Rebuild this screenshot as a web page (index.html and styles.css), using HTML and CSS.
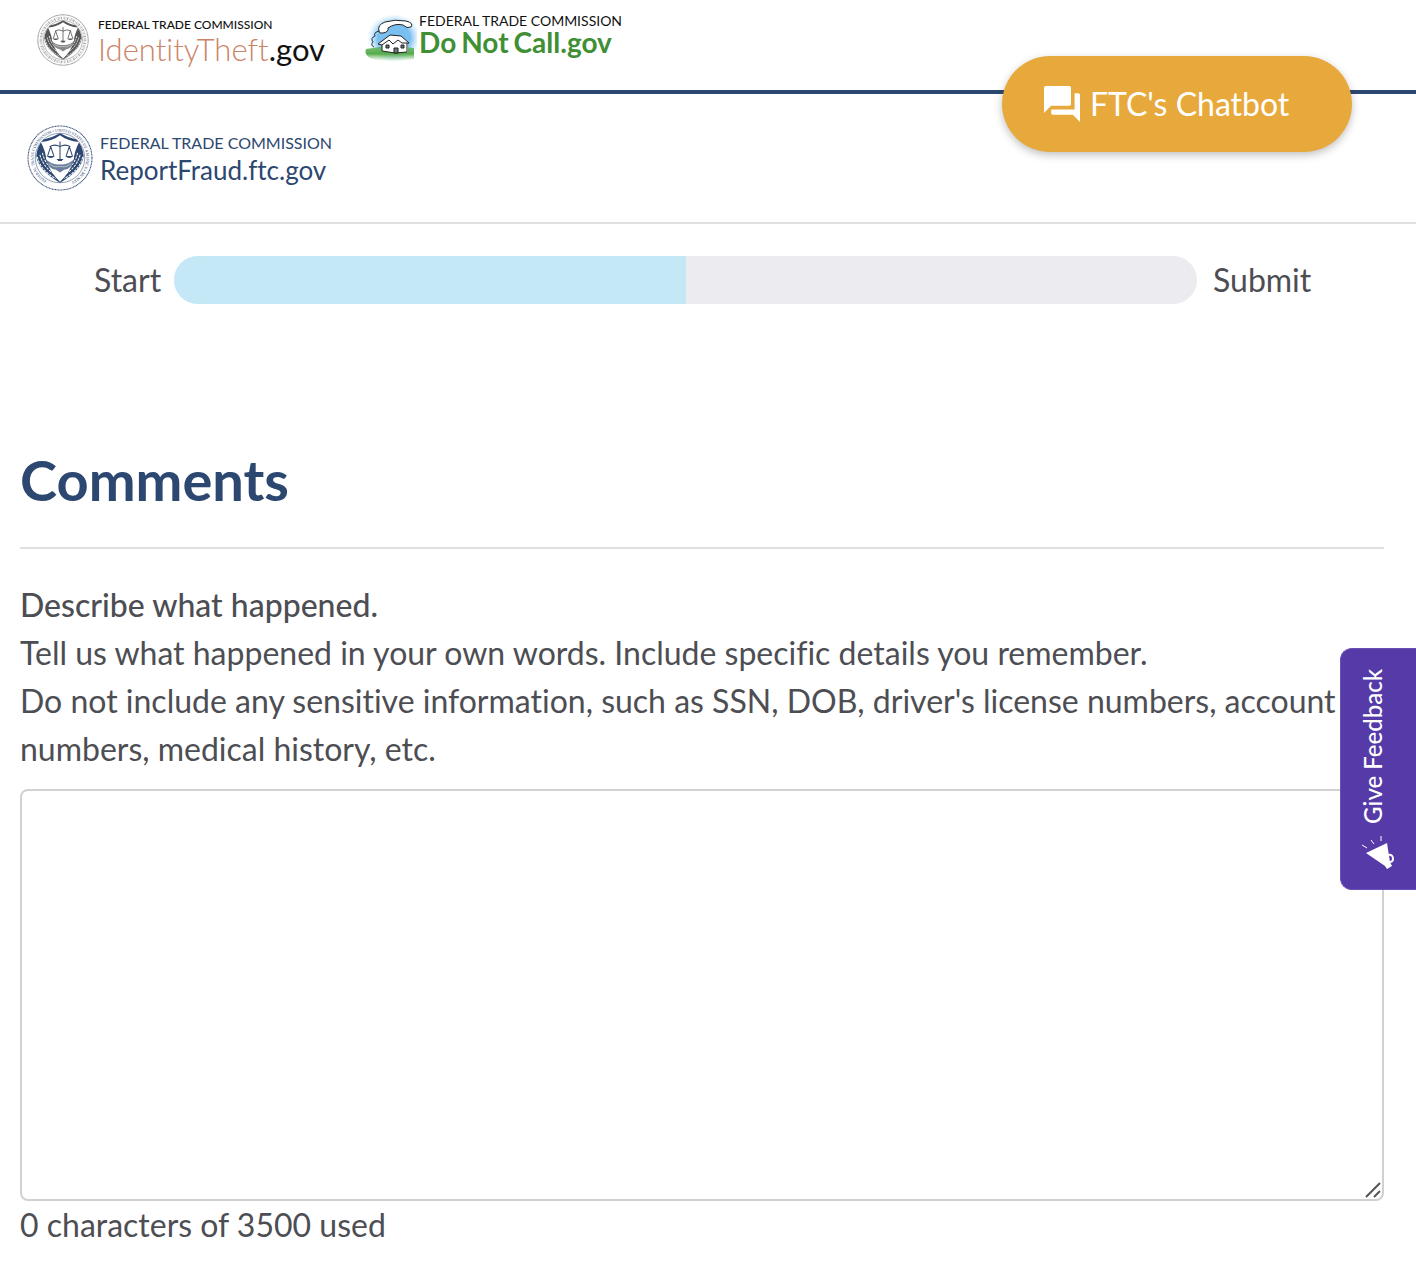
FILE: index.html
```html
<!DOCTYPE html>
<html lang="en">
<head>
<meta charset="utf-8">
<meta name="viewport" content="width=device-width, initial-scale=1">
<title>ReportFraud.ftc.gov - Comments</title>
<link rel="stylesheet" href="styles.css">
</head>
<body>
<svg class="defs" aria-hidden="true">
  <symbol id="seal" viewBox="0 0 128 128">
    <circle cx="64" cy="64" r="62" fill="#fff" stroke="currentColor" stroke-width="2" stroke-dasharray="2 1"/>
    <circle cx="64" cy="64" r="48" fill="none" stroke="currentColor" stroke-width="1"/>
    <path fill="currentColor" d="M32 28Q48 25 64 16Q80 25 96 28Q108 40 110 60Q106 88 64 112Q22 88 18 60Q20 40 32 28z"/>
    <path fill="none" stroke="#fff" stroke-width="2" stroke-dasharray="5 2" d="M20 62Q26 88 56 104M25 58Q32 83 56 97M108 62Q102 88 72 104M103 58Q96 83 72 97M30 54Q34 74 50 86M98 54Q94 74 78 86"/>
    <path fill="#fff" d="M27 33Q50 31 64 20Q78 31 101 33Q91 54 91 66Q84 92 64 110Q44 92 37 66Q37 54 27 33z"/>
    <path fill="none" stroke="currentColor" stroke-width="2" d="M64 32V66M44 42Q54 36 64 42Q74 36 84 42M58 67H70M46 42L40 60M46 42L52 60M82 42L76 60M82 42L88 60"/>
    <path fill="currentColor" d="M38 60H54Q46 68 38 60zM74 60H90Q82 68 74 60zM60 66H68V70H60z"/>
    <path fill="currentColor" opacity=".7" d="M36 66Q50 79 64 76Q78 79 92 66Q86 86 72 87L64 92L56 87Q42 86 36 66z"/>
    <path fill="none" stroke="#fff" stroke-width="1" d="M43 75Q54 84 64 80Q74 84 85 75"/>
  </symbol>
</svg>

<nav class="sites" aria-label="Related sites">
  <a class="site site-theft" href="#identitytheft">
    <svg class="seal-small" viewBox="0 0 128 128" aria-hidden="true">
      <use href="#seal"/>
      <circle cx="64" cy="64" r="54" fill="none" stroke="currentColor" stroke-width="7" stroke-dasharray="2 2 1 2 3 3 1 2" opacity=".5"/>
    </svg>
    <span class="site-text">
      <span class="agency agency-bold">FEDERAL TRADE COMMISSION</span>
      <span class="theft-name">IdentityTheft<span class="theft-tld">.gov</span></span>
    </span>
  </a>
  <a class="site site-call" href="#donotcall">
    <svg class="house" viewBox="0 0 52 48" aria-hidden="true">
      <defs>
        <radialGradient id="sky"><stop offset=".6" stop-color="#79bff0"/><stop offset="1" stop-color="#b9e0fa" stop-opacity="0"/></radialGradient>
        <linearGradient id="grass" x2="0" y2="1"><stop offset="0" stop-color="#55ab49" stop-opacity=".7"/><stop offset=".5" stop-color="#55ab49"/><stop offset="1" stop-color="#8ac87f" stop-opacity="0"/></linearGradient>
      </defs>
      <ellipse cx="29" cy="24" rx="27" ry="24" fill="url(#sky)"/>
      <path fill="url(#grass)" d="M1 35Q24 30 49 34V45Q24 50 5 44Q-1 40 1 35z"/>
      <path d="M15 17Q8 18 10 22Q5 24 8 28Q5 31 9 33" fill="none" stroke="#234" stroke-width="1"/>
      <path d="M17 27L32 24L43 28V38L30 39L17 37z" fill="#fff"/>
      <path d="M17 29V37L30 39L42 38V29" fill="none" stroke="#222" stroke-width="1"/>
      <path d="M13 30L25 21L36 22L44 29L37 29L33 26L28 30L24 26L17 31z" fill="#fff" stroke="#222" stroke-width="1"/>
      <path d="M21 31h3v3h-3zM29 34h4v5h-4zM36 31h3v3h-3z" fill="#68777d" stroke="#222" stroke-width="1"/>
      <path d="M14 17Q12 11 20 8Q30 5 41 7Q49 9 46 13Q42 15 38 11Q30 9 23 14Q24 18 18 19Q14 20 14 17z" fill="#fff" stroke="#222" stroke-width="1"/>
    </svg>
    <span class="site-text">
      <span class="agency agency-wide">FEDERAL TRADE COMMISSION</span>
      <span class="call-name">Do<span class="call-word">Not</span><span class="call-word">Call.gov</span></span>
    </span>
  </a>
</nav>

<header class="header">
  <a class="brand" href="#home">
    <svg class="seal" viewBox="0 0 128 128" aria-hidden="true">
      <use href="#seal"/>
      <path id="ring" d="M38 108A51 51 0 0 1 90 20A51 51 0 0 1 38 108" fill="none"/>
      <text class="ring-text"><textPath href="#ring">FEDERAL TRADE COMMISSION • UNITED STATES OF AMERICA • MCMXV</textPath></text>
    </svg>
    <span class="site-text">
      <span class="brand-agency">FEDERAL TRADE COMMISSION</span>
      <span class="brand-name">ReportFraud.ftc.gov</span>
    </span>
  </a>
</header>

<main class="main">
  <div class="progress">
    <span class="progress-start">Start</span>
    <div class="track" role="progressbar" aria-label="Report progress" aria-valuenow="50" aria-valuemin="0" aria-valuemax="100"><div class="fill" style="width:50%"></div></div>
    <span class="progress-end">Submit</span>
  </div>

  <h1 class="title">Comments</h1>

  <form class="form">
    <label class="question" for="comments">Describe what happened.</label>
    <p class="hint">Tell us what happened in your own words. Include specific details you remember.</p>
    <p class="hint">Do not include any sensitive information, such as SSN, DOB, driver's license numbers, account numbers, medical history, etc.</p>
    <div class="field">
      <textarea class="comments" id="comments" maxlength="3500"></textarea>
      <svg class="grip" viewBox="0 0 16 16" aria-hidden="true"><path d="M1 15L15 1M9 15L15 9"/></svg>
    </div>
    <p class="count">0 characters of 3500 used</p>
  </form>
</main>

<button class="chatbot" type="button">
  <svg class="chat-icon" viewBox="2 2 20 20" aria-hidden="true"><path d="M21 6h-2v9H6v2c0 .55.45 1 1 1h11l4 4V7c0-.55-.45-1-1-1zm-4 6V3c0-.55-.45-1-1-1H3c-.55 0-1 .45-1 1v14l4-4h10c.55 0 1-.45 1-1z"/></svg>
  <span>FTC's Chatbot</span>
</button>

<button class="feedback" type="button">
  <span class="feedback-text">Give Feedback</span>
  <svg class="horn" viewBox="0 0 34 34" aria-hidden="true">
    <path fill="#fff" d="M5 18L26 8L29 27L31 31L26 34L24 31z"/>
    <path fill="none" stroke="#fff" stroke-width="2" d="M27 20Q32 19 32 24Q32 27 28 27"/>
    <path fill="none" stroke="#fff" stroke-width="1" d="M1 10L6 13M10 5L13 9M20 1V6"/>
  </svg>
</button>
</body>
</html>
```
FILE: styles.css
```css
* { box-sizing: border-box; }
body {
  margin: 0;
  background: #fff;
  color: #4d4e53;
  font: 32px/48px Lato, "Liberation Sans", sans-serif;
  font-variant-ligatures: none;
}
a { color: inherit; text-decoration: none; }
p { margin: 0; }
.defs { position: absolute; width: 0; height: 0; }

.sites {
  display: flex;
  gap: 40px;
  height: 94px;
  padding: 14px 36px;
  border-bottom: 4px solid #2c4770;
}
.site { display: flex; }
.site-text { display: flex; flex-direction: column; white-space: nowrap; }
.site-theft { gap: 8px; color: #111; }
.site-call { gap: 2px; }
.seal-small { width: 54px; height: 52px; color: #555; }
.agency { color: #111; line-height: 16px; }
.agency-bold { margin-top: 3px; font-size: 12px; font-weight: 500; }
.theft-name { color: #cb8468; font-size: 31px; line-height: 32px; font-weight: 300; }
.theft-tld { color: #111; font-weight: 400; }
.house { width: 52px; height: 48px; }
.agency-wide { font-size: 14px; line-height: 14px; }
.call-name { color: #3f8f35; font-size: 28px; line-height: 28px; font-weight: 700; }
.call-word { margin-left: 5px; }

.header {
  padding: 30px 27px;
  border-bottom: 2px solid #e0e0e0;
}
.brand { display: flex; gap: 7px; width: max-content; color: #2c4770; }
.seal { width: 66px; height: 68px; }
.ring-text { fill: #2c4770; font: 8px "Liberation Serif", serif; }
.brand-agency { margin-top: 10px; font-size: 16px; line-height: 18px; }
.brand-name { font-size: 26px; line-height: 36px; }

.main { padding: 32px 32px 12px 20px; }
.progress { display: flex; gap: 16px; padding: 0 74px; }
.progress-start { width: 64px; }
.progress-end { width: 97px; }
.track { flex: 1; height: 48px; overflow: hidden; border-radius: 24px; background: #ebebf0; }
.fill { height: 100%; background: #c5e8f7; }

.title {
  margin: 142px 0 32px;
  padding-bottom: 34px;
  border-bottom: 2px solid #e0e0e0;
  color: #2c4770;
  font-size: 56px;
  line-height: 67px;
  font-weight: 700;
}
.question { display: block; font-weight: 500; }
.field { position: relative; margin-top: 16px; }
.comments {
  display: block;
  width: 100%;
  height: 412px;
  padding: 12px;
  border: 2px solid #cfd1d4;
  border-radius: 8px;
  background: #fff;
  color: inherit;
  font: inherit;
  resize: none;
}
.grip { position: absolute; right: 3px; bottom: 3px; width: 16px; height: 16px; fill: none; stroke: #555; stroke-width: 2; }

.chatbot {
  position: absolute;
  top: 56px;
  right: 64px;
  display: flex;
  align-items: center;
  gap: 10px;
  width: 350px;
  height: 96px;
  padding: 0 42px;
  border: 0;
  border-radius: 48px;
  background: #e8a93c;
  box-shadow: 0 3px 8px rgba(0, 0, 0, .25);
  color: #fff;
  font: inherit;
}
.chat-icon { width: 36px; height: 36px; fill: #fff; }

.feedback {
  position: fixed;
  top: 648px;
  right: 0;
  display: flex;
  flex-direction: column;
  align-items: flex-start;
  justify-content: space-between;
  width: 76px;
  height: 242px;
  padding: 20px;
  border: 1px solid #6a50b5;
  border-right: 0;
  border-radius: 12px 0 0 12px;
  background: #563ba8;
  color: #fff;
  font: 24px/24px Lato, "Liberation Sans", sans-serif;
}
.feedback-text { writing-mode: vertical-rl; transform: rotate(180deg); white-space: nowrap; font-weight: 500; }
.horn { width: 34px; height: 34px; }
```
